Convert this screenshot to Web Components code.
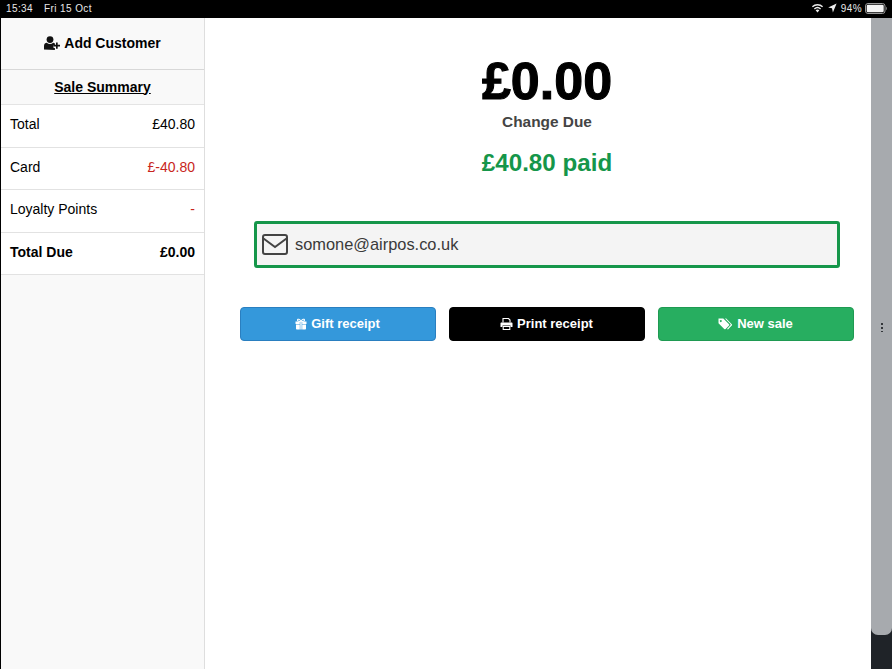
<!DOCTYPE html>
<html>
<head>
<meta charset="utf-8">
<style>
  html, body { margin: 0; height: 100%; }
  body { font-family: "Liberation Sans", Arial, sans-serif; background: #000; overflow: hidden; }
  pos-screen { height: 669px; }
</style>
</head>
<body>
<pos-screen>
  <status-bar slot="status"></status-bar>
  <sale-sidebar slot="side">
    <summary-row label="Total" value="£40.80"></summary-row>
    <summary-row label="Card" value="£-40.80" tone="negative"></summary-row>
    <summary-row label="Loyalty Points" value="-" tone="negative"></summary-row>
    <summary-row label="Total Due" value="£0.00" strong></summary-row>
  </sale-sidebar>
  <change-panel slot="main">
    <receipt-email value="somone@airpos.co.uk"></receipt-email>
    <action-button color="#3498db" edge="#2a7fc0" icon="gift">Gift receipt</action-button>
    <action-button color="#000" edge="#000" icon="print">Print receipt</action-button>
    <action-button color="#27ae60" edge="#1f9a52" icon="tags">New sale</action-button>
  </change-panel>
  <split-handle slot="handle"></split-handle>
</pos-screen>

<script>
class PosScreen extends HTMLElement {
    constructor() {
        super();
        this.attachShadow({ mode: 'open' });
        this.shadowRoot.innerHTML = `
      <style>
        :host { display: flex; flex-direction: column; width: 892px; }
        .body { flex: 1; display: flex; min-height: 0; }
      </style>
      <slot name="status"></slot>
      <div class="body">
        <slot name="side"></slot>
        <slot name="main"></slot>
        <slot name="handle"></slot>
      </div>
    `;
    }
}

class StatusBar extends HTMLElement {
    constructor() {
        super();
        this.attachShadow({ mode: 'open' });
        this.shadowRoot.innerHTML = `
      <style>
        :host {
          display: flex;
          align-items: center;
          height: 18px;
          padding: 0 4px 2px 6px;
          box-sizing: border-box;
          background: #000;
          color: #e8e8e8;
          font-size: 10px;
          letter-spacing: 0.4px;
        }
        .date { margin-left: 11px; }
        .right { margin-left: auto; display: flex; align-items: center; gap: 3px; }
        svg { display: block; }
      </style>
      <span>15:34</span>
      <span class="date">Fri 15 Oct</span>
      <div class="right">
        <svg width="13" height="10" viewBox="0 0 13 10" aria-hidden="true">
          <path d="M6.5 9.5 4.6 7.3a2.8 2.8 0 0 1 3.8 0z" fill="#eee"/>
          <path d="M3.4 6a4.6 4.6 0 0 1 6.2 0M1.4 3.8a7.4 7.4 0 0 1 10.2 0" fill="none" stroke="#eee" stroke-width="1.4"/>
        </svg>
        <svg width="9" height="10" viewBox="0 0 9 10" style="margin-left:1px" aria-hidden="true">
          <path d="M8.6 .6 4.9 9.4 4 5.2 .2 4.4z" fill="#eee"/>
        </svg>
        <span style="margin-left:1px">94%</span>
        <svg width="23" height="11" viewBox="0 0 23 11" aria-hidden="true">
          <rect x=".5" y=".5" width="19.5" height="10" rx="2.5" fill="none" stroke="#999"/>
          <rect x="1.7" y="1.7" width="17" height="7.6" rx="1.4" fill="#f4f4f4"/>
          <path d="M21 3.8c1 .3 1 3.1 0 3.4z" fill="#999"/>
        </svg>
      </div>
    `;
    }
}

class SaleSidebar extends HTMLElement {
    constructor() {
        super();
        this.attachShadow({ mode: 'open' });
        this.shadowRoot.innerHTML = `
      <style>
        :host {
          display: block;
          width: 204px;
          margin-left: 1px;
          box-sizing: border-box;
          background: #f9f9f9;
          border-right: 1px solid #dedede;
          color: #000;
        }
        .add {
          height: 52px;
          box-sizing: border-box;
          border-bottom: 1px solid #d8d8d8;
          display: flex;
          align-items: center;
          justify-content: center;
          gap: 4px;
          font-size: 14px;
          font-weight: bold;
          padding-bottom: 1px;
        }
        .title {
          height: 35px;
          box-sizing: border-box;
          border-bottom: 1px solid #e4e4e4;
          display: flex;
          align-items: center;
          justify-content: center;
          font-size: 14px;
          font-weight: bold;
          text-decoration: underline;
          padding-bottom: 1px;
        }
      </style>
      <div class="add">
        <svg width="16" height="14" viewBox="0 0 16 14" aria-hidden="true">
          <circle cx="6" cy="3.6" r="3.4" fill="#111"/>
          <path d="M0 13.5V10c0-2 1.4-3.2 2.8-3.2.9.8 2 1.2 3.2 1.2s2.300-.4 3.200-1.200c.6 0 1.200.2 1.700.6v2h-1.400v2.600h1.400v2z" fill="#111"/>
          <path d="M12 6.500h1.700v2.300H16v1.700h-2.300v2.300H12v-2.300H9.700V8.800H12z" fill="#111"/>
        </svg>
        <span>Add Customer</span>
      </div>
      <div class="title">Sale Summary</div>
      <slot></slot>
    `;
    }
}

class SummaryRow extends HTMLElement {
    constructor() {
        super();
        this.attachShadow({ mode: 'open' });
    }

    connectedCallback() {
        const label = this.getAttribute('label') || '';
        const value = this.getAttribute('value') || '';
        const valueColor = this.getAttribute('tone') === 'negative' ? '#c8261c' : '#000';
        const weight = this.hasAttribute('strong') ? 'bold' : 'normal';

        this.shadowRoot.innerHTML = `
      <style>
        :host {
          display: flex;
          align-items: center;
          justify-content: space-between;
          height: 42.6px;
          box-sizing: border-box;
          padding: 0 9px 3px 9px;
          background: #fff;
          border-bottom: 1px solid #e2e2e2;
          font-size: 14px;
          font-weight: ${weight};
        }
        .value { color: ${valueColor}; }
      </style>
      <span>${label}</span>
      <span class="value">${value}</span>
    `;
    }
}

class ChangePanel extends HTMLElement {
    constructor() {
        super();
        this.attachShadow({ mode: 'open' });
        this.shadowRoot.innerHTML = `
      <style>
        :host {
          display: block;
          flex: 1;
          box-sizing: border-box;
          background: #fff;
          padding: 0 17px 0 35px;
          text-align: center;
        }
        .amount {
          font-size: 52px;
          line-height: 60px;
          font-weight: bold;
          color: #000;
          -webkit-text-stroke: 1.1px #000;
          padding-top: 33px;
        }
        .label {
          font-size: 15.4px;
          line-height: 18px;
          font-weight: bold;
          color: #444;
          margin-top: 2px;
        }
        .paid {
          font-size: 24.2px;
          line-height: 28px;
          font-weight: bold;
          color: #15964a;
          margin-top: 18px;
        }
        .email { margin: 44px 14px 0; }
        .actions {
          display: grid;
          grid-template-columns: repeat(3, 196px);
          gap: 13px;
          margin-top: 39px;
        }
      </style>
      <div class="amount">£0.00</div>
      <div class="label">Change Due</div>
      <div class="paid">£40.80 paid</div>
      <div class="email"><slot name="email"></slot></div>
      <div class="actions"><slot></slot></div>
    `;
    }

    connectedCallback() {
        const email = this.querySelector('receipt-email');
        if (email) email.slot = 'email';
    }
}

class ReceiptEmail extends HTMLElement {
    constructor() {
        super();
        this.attachShadow({ mode: 'open' });
    }

    connectedCallback() {
        const value = this.getAttribute('value') || '';
        this.shadowRoot.innerHTML = `
      <style>
        :host {
          display: flex;
          align-items: center;
          gap: 7px;
          height: 47px;
          box-sizing: border-box;
          padding: 0 5px;
          background: #f4f4f4;
          border: 3px solid #15964a;
          border-radius: 3px;
          font-size: 16.4px;
          color: #3a3a3a;
          text-align: left;
        }
        svg { display: block; flex: none; }
      </style>
      <svg width="26" height="21" viewBox="0 0 26 21" aria-hidden="true">
        <rect x="1" y="1" width="24" height="19" rx="2" fill="none" stroke="#444" stroke-width="2"/>
        <path d="M1.500 4.500 13 13 24.500 4.500" fill="none" stroke="#444" stroke-width="2"/>
      </svg>
      <span>${value}</span>
    `;
    }
}

const BUTTON_ICONS = {
    gift: `<svg width="12" height="12" viewBox="0 0 12 12"><path d="M.5 3.500h4.300V6H.5zM7.200 3.500h4.300V6H7.200zM5.300 3.500h1.400V11.500H5.300zM1 6.500h3.800v5H1.800A.8.800 0 0 1 1 10.700zM7.200 6.500H11v4.200a.8.800 0 0 1-.8.800h-3z" fill="#fff"/><path d="M5.800 3.300C4.800 1 2.600.6 2.500 2s2 1.700 3.300 1.300zM6.200 3.300C7.200 1 9.400.6 9.500 2s-2 1.700-3.300 1.300z" fill="none" stroke="#fff" stroke-width="1.100"/></svg>`,
    print: `<svg width="13" height="12" viewBox="0 0 13 12"><path d="M3 4.500V.5h5.500L10 2v2.500" fill="none" stroke="#fff" stroke-width="1.100"/><path d="M1.500 4.500h10c.6 0 1 .4 1 1V9h-2V7.500h-8V9h-2V5.500c0-.6.400-1 1-1z" fill="#fff"/><path d="M3.200 8.500h6.600v3H3.200z" fill="none" stroke="#fff" stroke-width="1.100"/></svg>`,
    tags: `<svg width="15" height="12" viewBox="0 0 15 12"><path d="M.5.500h4.800l5.700 5.700a1 1 0 0 1 0 1.400L7.600 11a1 1 0 0 1-1.400 0L.5 5.300zM2.800 2a1 1 0 1 0 .01 0z" fill="#fff" fill-rule="evenodd"/><path d="M7 .5h1.200l5.600 5.700a1 1 0 0 1 0 1.400L10 11.500l-1-.6 3.400-3.700a1 1 0 0 0 0-1.300z" fill="#fff"/></svg>`
};

class ActionButton extends HTMLElement {
    constructor() {
        super();
        this.attachShadow({ mode: 'open' });
    }

    connectedCallback() {
        const color = this.getAttribute('color') || '#000';
        const edge = this.getAttribute('edge') || color;
        const icon = BUTTON_ICONS[this.getAttribute('icon')] || '';
        this.shadowRoot.innerHTML = `
      <style>
        :host {
          display: flex;
          align-items: center;
          justify-content: center;
          gap: 4px;
          height: 34px;
          box-sizing: border-box;
          background: ${color};
          border: 1px solid ${edge};
          border-radius: 4px;
          color: #fff;
          font-size: 13px;
          font-weight: bold;
          padding: 0 1px 1px 0;
        }
        svg { display: block; }
      </style>
      ${icon}
      <slot></slot>
    `;
    }
}

class SplitHandle extends HTMLElement {
    constructor() {
        super();
        this.attachShadow({ mode: 'open' });
        this.shadowRoot.innerHTML = `
      <style>
        :host {
          display: block;
          position: relative;
          width: 21px;
          background: #1f2328;
        }
        .pane {
          height: 617px;
          background: #a7aaae;
          border-radius: 0 0 7px 7px;
          position: relative;
        }
        .grip {
          position: absolute;
          left: 10px;
          top: 304px;
          width: 2px;
          height: 10px;
          background: radial-gradient(circle, #33363a 0 1px, transparent 1px) 0 0 / 2px 4px;
        }
      </style>
      <div class="pane"><div class="grip"></div></div>
    `;
    }
}

customElements.define('pos-screen', PosScreen);
customElements.define('status-bar', StatusBar);
customElements.define('sale-sidebar', SaleSidebar);
customElements.define('summary-row', SummaryRow);
customElements.define('change-panel', ChangePanel);
customElements.define('receipt-email', ReceiptEmail);
customElements.define('action-button', ActionButton);
customElements.define('split-handle', SplitHandle);
</script>
</body>
</html>
